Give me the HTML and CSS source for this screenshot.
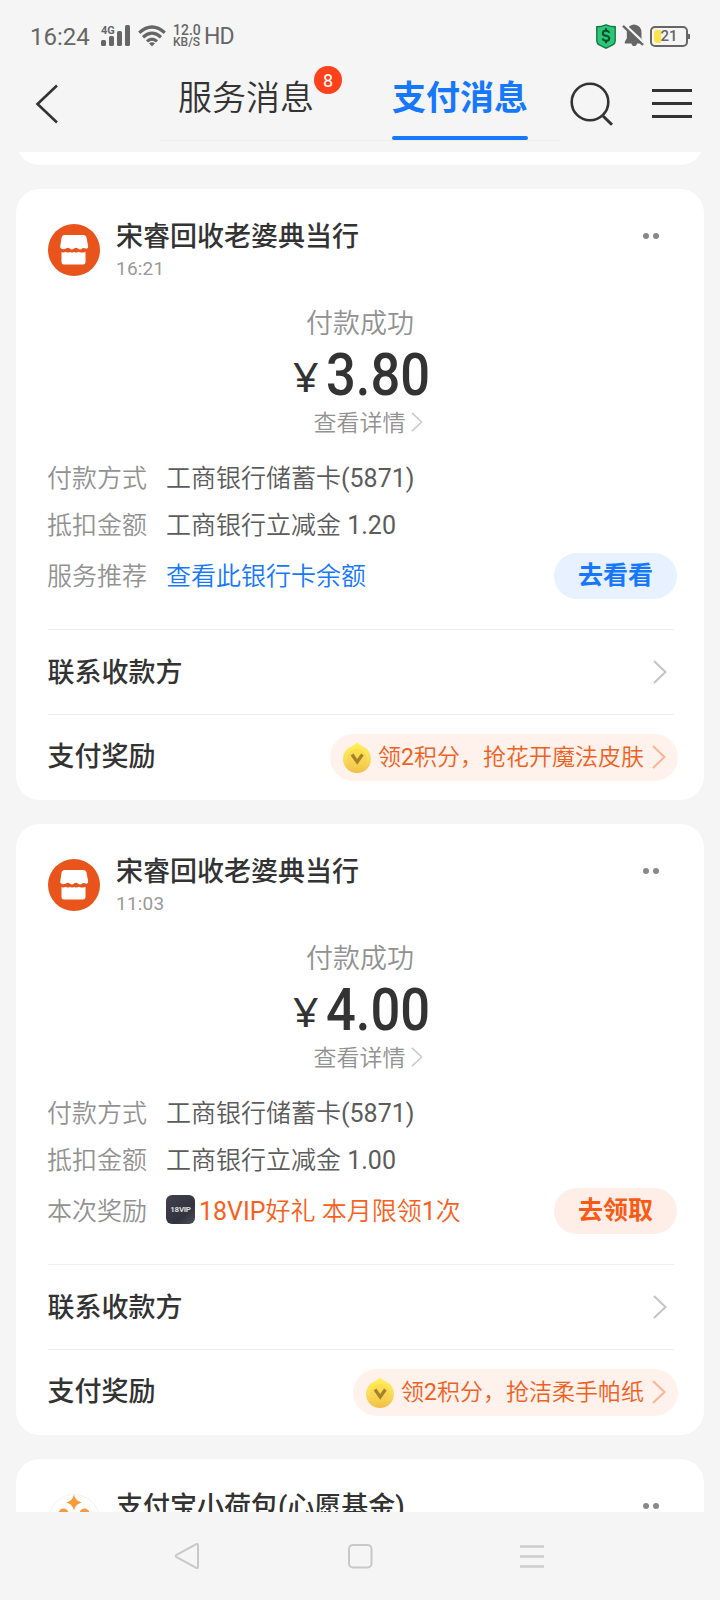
FILE: index.html
```html
<!DOCTYPE html>
<html lang="zh-CN">
<head>
<meta charset="utf-8">
<title>支付消息</title>
<link rel="stylesheet" href="styles.css">
</head>
<body>
<svg class="defs" width="0" height="0">
  <defs>
    <linearGradient id="gold" x1="0" y1="0" x2="0" y2="1"><stop offset="0" stop-color="#fff04f"/><stop offset=".55" stop-color="#fbdc5c"/><stop offset="1" stop-color="#f1bd47"/></linearGradient>
    <symbol id="shop" viewBox="0 0 52 52">
      <circle cx="26" cy="26" r="26" fill="#e9541c"/>
      <path fill="#fff" d="M16.500 11h19c1.600 0 2.700.9 3 2.500l1.600 8.500c.3 2-1 3-2.600 2.600-1.500-.4-2-1.100-3.400 0-1.400 1.200-2.700 1.200-4.200 0-1.400-1.100-2.500-1.100-3.900 0-1.400 1.200-2.800 1.200-4.200 0-1.400-1.100-2.500-1.100-3.900 0-1.200 1-5.900 1.200-5.700-2l1.400-9c.3-1.700 1.400-2.600 2.900-2.600z"/>
      <path fill="#fff" d="M13.500 28c2 .8 3 .6 4.400-.3 1.400 1.200 2.700 1.200 4.200 0 1.400 1.200 2.700 1.200 4.100 0 1.400 1.200 2.700 1.200 4.100 0 1.600 1 4.500 1.200 7.200 0v10.500a2.300 2.300 0 0 1-2.300 2.300H15.800a2.300 2.300 0 0 1-2.300-2.300z"/>
    </symbol>
    <symbol id="coin" viewBox="0 0 28 31">
      <path fill="url(#gold)" d="M14 0.500c1.700 1.800 3.200 2.800 5.800 4.100A14 14 0 0 1 28 17a14 14 0 0 1-28 0A14 14 0 0 1 8.200 4.600C10.800 3.300 12.300 2.300 14 .5z"/>
      <circle cx="14" cy="17" r="10" fill="#f6cb48" opacity=".35"/>
      <path d="M9 12.500l5.200 7.500 5.200-7.500" fill="none" stroke="#a5822a" stroke-width="3.200"/>
    </symbol>
    <symbol id="chevron" viewBox="0 0 14 24"><path d="M1 1l11.500 11L1 23" fill="none" stroke="currentColor" stroke-width="2"/></symbol>
  </defs>
</svg>
<div class="phone">
  <div class="status">
    <span class="clock">16:24</span>
    <div class="signal">
      <svg width="29" height="22" viewBox="0 0 29 22"><g fill="#666"><rect x="0" y="15" width="5" height="6" rx="1.500"/><rect x="8" y="11" width="5" height="10" rx="1.500"/><rect x="16" y="6" width="5" height="15" rx="1.500"/><rect x="24" y="0" width="5" height="21" rx="1.500"/></g></svg>
      <span class="gen">4G</span>
    </div>
    <svg class="wifi" width="28" height="22" viewBox="0 0 28 22"><g fill="none" stroke="#666" stroke-width="3.200"><path d="M1.200 7.800Q14-3.800 26.800 7.800"/><path d="M5 12.200Q14 4.200 23 12.200"/><path d="M9 16.400Q14 12 19 16.400"/></g><path fill="#666" d="M11 18.300q3-2 6 0l-3 3.200z"/></svg>
    <span class="speed"><span>12.0</span><span>KB/S</span></span>
    <span class="hd">HD</span>
    <svg class="shield" width="20" height="25" viewBox="0 0 20 25"><path d="M10 .8C13 2 16 2.700 19.200 2.700V17c0 2-.8 2.900-2.500 3.800L10 24.200 3.300 20.800C1.600 19.900.8 19 .8 17V2.700C4 2.700 7 2 10 .8z" fill="#2bc678" stroke="#137a45" stroke-width="1.400"/><path d="M13.200 8.800c-.5-1.500-1.700-2-3.200-2-4.200 0-4.200 4.600 0 4.900 4.300.4 4.300 5.100 0 5.100-1.700 0-3-.7-3.400-2.200M10 4.300v2.200M10 17v2.200" fill="none" stroke="#084f2d" stroke-width="2.100"/></svg>
    <svg class="bell" width="20" height="24" viewBox="0 0 20 24"><path fill="#666" d="M10.500.5c4.500.8 7 3.600 7 7.800v6.200l2 3.300v1.700H13c-.2 3.400-5.300 3.400-5.500 0H.8v-1.700l2-3.300V8.300C2.800 4 5.500 1 10.500.5z"/><path d="M-1-.8l21 19.800" stroke="#f5f5f5" stroke-width="2.600"/><path d="M-1 1.800l20 19.200" stroke="#666" stroke-width="2.400"/></svg>
    <div class="battery"><span class="level"></span><span class="pct">21</span><span class="tip"></span></div>
  </div>
  <div class="header">
    <svg class="back" width="24" height="40" viewBox="0 0 24 40"><path d="M22 1.500L2.500 20 22 38.500" fill="none" stroke="#333" stroke-width="2.600"/></svg>
    <div class="tabs">
      <div class="tab">服务消息<span class="badge">8</span></div>
      <div class="tab active">支付消息</div>
    </div>
    <svg class="search" width="44" height="44" viewBox="0 0 44 44"><circle cx="20" cy="20" r="18.300" fill="none" stroke="#333" stroke-width="2.600"/><path d="M33 34l9 8.800" stroke="#333" stroke-width="3"/></svg>
    <svg class="menu" width="40" height="30" viewBox="0 0 40 30"><path d="M0 1.500h40M0 14.500h40M0 27.500h40" stroke="#333" stroke-width="3"/></svg>
  </div>
  <div class="feed">
    <div class="card prev"></div>

    <div class="card">
      <div class="merchant">
        <svg class="avatar"><use href="#shop"/></svg>
        <div class="who"><div class="name">宋睿回收老婆典当行</div><div class="time">16:21</div></div>
        <div class="dots"><i></i><i></i></div>
      </div>
      <div class="state">付款成功</div>
      <div class="amount"><span class="yen">¥</span><span class="num"><span class="digits">3.80</span></span></div>
      <div class="detail">查看详情<svg class="chev-s"><use href="#chevron"/></svg></div>
      <div class="row"><span class="label">付款方式</span><span class="value">工商银行储蓄卡<span class="lat">(5871)</span></span></div>
      <div class="row"><span class="label">抵扣金额</span><span class="value">工商银行立减金<span class="lat"> 1.20</span></span></div>
      <div class="row action"><span class="label">服务推荐</span><span class="value blue">查看此银行卡余额</span><span class="btn btn-blue">去看看</span></div>
      <div class="link"><span class="title">联系收款方</span><svg class="chev"><use href="#chevron"/></svg></div>
      <div class="link last"><span class="title">支付奖励</span><div class="pill"><svg class="coin"><use href="#coin"/></svg><span class="offer">领<span class="lat">2</span>积分，抢花开魔法皮肤</span><svg class="chev"><use href="#chevron"/></svg></div></div>
    </div>

    <div class="card">
      <div class="merchant">
        <svg class="avatar"><use href="#shop"/></svg>
        <div class="who"><div class="name">宋睿回收老婆典当行</div><div class="time">11:03</div></div>
        <div class="dots"><i></i><i></i></div>
      </div>
      <div class="state">付款成功</div>
      <div class="amount"><span class="yen">¥</span><span class="num"><span class="digits">4.00</span></span></div>
      <div class="detail">查看详情<svg class="chev-s"><use href="#chevron"/></svg></div>
      <div class="row"><span class="label">付款方式</span><span class="value">工商银行储蓄卡<span class="lat">(5871)</span></span></div>
      <div class="row"><span class="label">抵扣金额</span><span class="value">工商银行立减金<span class="lat"> 1.00</span></span></div>
      <div class="row action"><span class="label">本次奖励</span><span class="vip"><span>18VIP</span></span><span class="value orange"><span class="lat">18VIP</span>好礼 本月限领<span class="lat">1</span>次</span><span class="btn btn-orange">去领取</span></div>
      <div class="link"><span class="title">联系收款方</span><svg class="chev"><use href="#chevron"/></svg></div>
      <div class="link last"><span class="title">支付奖励</span><div class="pill"><svg class="coin"><use href="#coin"/></svg><span class="offer">领<span class="lat">2</span>积分，抢洁柔手帕纸</span><svg class="chev"><use href="#chevron"/></svg></div></div>
    </div>

    <div class="card">
      <div class="merchant">
        <svg class="avatar" viewBox="0 0 52 52"><circle cx="26" cy="26" r="25.500" fill="#fff" stroke="#f3f3f3"/><path d="M26 .5c1.500 5 3 6.500 8 8-5 1.500-6.500 3-8 8-1.500-5-3-6.500-8-8 5-1.500 6.500-3 8-8z" fill="#fb9a38"/><circle cx="15.500" cy="19.500" r="5" fill="#f59a43"/><circle cx="36.500" cy="19.500" r="5" fill="#f59a43"/></svg>
        <div class="who"><div class="name">支付宝小荷包(心愿基金)</div></div>
        <div class="dots"><i></i><i></i></div>
      </div>
    </div>
  </div>
  <div class="nav">
    <svg width="26" height="28" viewBox="0 0 26 28"><path d="M22.300 2.200L3 12.500q-2.600 1.500 0 3L22.300 25.800q1.700.8 1.700-1V3.200q0-1.800-1.700-1z" fill="none" stroke="#c8c8c8" stroke-width="2"/></svg>
    <svg width="26" height="28" viewBox="0 0 26 28"><rect x="2" y="3" width="22.500" height="22.500" rx="4" fill="none" stroke="#c8c8c8" stroke-width="2"/></svg>
    <svg width="26" height="28" viewBox="0 0 26 28"><path d="M1 4.500h24M1 14.500h24M1 24.500h24" stroke="#ccc" stroke-width="2.400"/></svg>
  </div>
</div>
</body>
</html>
```

FILE: styles.css
```css
* { box-sizing: border-box; }
body { margin: 0; background: #f5f5f5; font-family: Roboto, "Noto Sans CJK SC", sans-serif; color: #333; }
svg { display: block; flex: none; overflow: visible; }
.defs { position: absolute; }
.phone { width: 720px; height: 1600px; display: flex; flex-direction: column; overflow: hidden; white-space: nowrap; }

.status { height: 72px; flex: none; display: flex; align-items: center; padding: 0 30px 0 30px; color: #666; }
.clock { font-size: 24px; width: 61px; line-height: 28px; margin-top: 1px; }
.signal { position: relative; margin-left: 10px; }
.gen { position: absolute; left: 0; top: 1px; font-size: 11px; line-height: 10px; font-weight: 700; }
.wifi { margin-left: 8px; }
.speed { display: flex; flex-direction: column; width: 29px; margin-left: 7px; font-size: 13px; line-height: 12px; font-weight: 500; }
.speed span:first-child { font-size: 14px; }
.speed span:last-child { font-size: 12px; }
.hd { font-size: 23px; line-height: 28px; margin-left: 2px; margin-top: 2px; letter-spacing: -.8px; }
.shield { margin-left: auto; }
.bell { margin-left: 8px; }
.battery { position: relative; width: 38px; height: 21px; margin: 0 2px 0 6px; border: 2px solid #666; border-radius: 5px; display: flex; align-items: center; justify-content: center; }
.level { position: absolute; left: 2px; top: 2px; width: 7px; height: 13px; background: #ffe34d; border-radius: 3px 1px 1px 3px; }
.pct { position: relative; font-size: 15px; line-height: 17px; font-weight: 500; }
.tip { position: absolute; right: -4px; top: 6px; width: 2px; height: 5px; background: #666; }

.header { height: 80px; flex: none; display: flex; align-items: flex-start; padding: 0 28px 0 35px; }
.back { margin-top: 12px; }
.tabs { width: 400px; height: 69px; margin-left: 101px; padding: 0 32px 0 18px; display: flex; justify-content: space-between; border-bottom: 1px solid #eee; }
.tab { position: relative; height: 69px; width: 136px; font-size: 34px; line-height: 53px; font-weight: 350; }
.active { color: #1677ff; font-weight: 700; }
.active::after { content: ""; position: absolute; left: 0; right: 0; bottom: 1px; height: 4px; border-radius: 2px; background: #1677ff; }
.badge { position: absolute; left: 136px; top: -6px; width: 28px; height: 28px; border-radius: 50%; background: #ff411c; color: #fff; font-size: 18px; line-height: 29px; text-align: center; font-weight: 400; }
.search { margin: 10px 0 0 10px; }
.menu { margin: 17px 0 0 auto; }

.feed { height: 1360px; flex: none; overflow: hidden; padding: 0 16px; display: flex; flex-direction: column; gap: 24px; }
.card { flex: none; height: 611px; border-radius: 24px; background: #fff; padding: 0 26px 0 32px; display: flex; flex-direction: column; }
.prev { height: 48px; margin-top: -35px; }
.merchant { height: 117px; display: flex; padding-top: 29px; }
.avatar { width: 52px; height: 52px; margin-top: 6px; margin-left: -.5px; }
.who { margin-left: 16.500px; }
.name { font-size: 27px; line-height: 38px; font-weight: 500; }
.time { font-size: 19px; line-height: 22px; margin-top: 2px; color: #999; letter-spacing: .2px; }
.dots { margin: 15px 19px 0 auto; display: flex; gap: 4px; }
.dots i { width: 6px; height: 6px; border-radius: 50%; background: #888; }
.state, .amount, .detail { display: flex; justify-content: center; align-items: center; margin-right: 6px; }
.state { height: 33px; padding-bottom: 2px; font-size: 27px; font-weight: 350; color: #929292; }
.amount { height: 67px; padding-top: 3px; }
.yen { width: 26px; font: 400 40px/48px "Noto Sans", sans-serif; margin: 5px 7px 0 0; transform: scaleX(1.12); transform-origin: left; }
.num { width: 102px; }
.digits { display: block; font-size: 59px; line-height: 67px; font-weight: 500; transform: scaleX(.89); transform-origin: left; }
.detail { height: 32px; padding-bottom: 3px; font-size: 23px; font-weight: 350; color: #929292; padding-left: 16px; }
.chev-s { width: 12px; height: 20px; margin: 2px 0 0 5px; color: #ccc; }
.row { height: 47px; display: flex; align-items: center; font-size: 25px; font-weight: 350; }
.row:nth-child(5) { margin-top: 17px; }
.label { width: 119px; margin-left: -1px; padding-bottom: 5px; color: #929292; }
.value { padding-bottom: 5px; color: #5c5c5c; }
.action .label, .action .value { padding-bottom: 4px; }
.lat { font-weight: 400; white-space: pre; }
.blue { color: #1677ff; }
.orange { color: #fa5f1c; }
.action { height: 54px; }
.btn { width: 123px; height: 46px; margin: 0 1px 0 auto; border-radius: 23px; font-weight: 700; line-height: 45px; text-align: center; }
.btn-blue { background: #e7f1ff; color: #1677ff; }
.btn-orange { background: #ffeee8; color: #fa5a14; }
.vip { width: 29px; height: 29px; margin: 0 4px 4px 0; border-radius: 6px; background: linear-gradient(135deg, #42424f, #333340 65%, #50505a); color: #ddd; display: flex; align-items: center; justify-content: center; }
.vip span { font-size: 8px; font-weight: 700; letter-spacing: -.3px; }
.link { height: 85px; margin-right: 4px; border-top: 1px solid #eee; display: flex; align-items: center; justify-content: space-between; font-size: 27px; font-weight: 500; }
.title { margin-left: -.5px; padding-bottom: 4px; }
.action + .link { margin-top: 26px; }
.chev { width: 14px; height: 24px; margin-right: 7px; margin-top: -1px; color: #c4c4c4; }
.last { height: 86px; }
.last .title { padding-bottom: 6px; }
.pill { height: 47px; margin-right: -4px; padding: 0 12px 0 13px; border-radius: 24px; background: #fff1eb; display: flex; align-items: center; font-size: 23px; font-weight: 350; color: #ee6122; }
.offer { padding-bottom: 5px; }
.coin { width: 28px; height: 31px; margin-right: 7px; }
.pill .chev { margin: -2px 0 0 8px; color: #f9b597; }

.nav { height: 88px; flex: none; display: flex; justify-content: space-between; align-items: center; padding: 0 175px 0 174px; }
```
